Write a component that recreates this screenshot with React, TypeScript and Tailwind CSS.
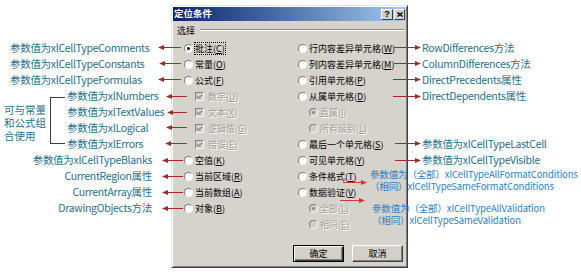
import React from "react";

type Opt = {
  t: string;
  k: string;
  kind?: "radio" | "check";
  on?: boolean;
  off?: boolean;
  indent?: boolean;
  focus?: boolean;
};

const leftOpts: Opt[] = [
  { t: "批注", k: "C", on: true, focus: true },
  { t: "常量", k: "O" },
  { t: "公式", k: "F" },
  { t: "数字", k: "U", kind: "check", on: true, off: true, indent: true },
  { t: "文本", k: "X", kind: "check", on: true, off: true, indent: true },
  { t: "逻辑值", k: "G", kind: "check", on: true, off: true, indent: true },
  { t: "错误", k: "E", kind: "check", on: true, off: true, indent: true },
  { t: "空值", k: "K" },
  { t: "当前区域", k: "R" },
  { t: "当前数组", k: "A" },
  { t: "对象", k: "B" },
];

const rightOpts: Opt[] = [
  { t: "行内容差异单元格", k: "W" },
  { t: "列内容差异单元格", k: "M" },
  { t: "引用单元格", k: "P" },
  { t: "从属单元格", k: "D" },
  { t: "直属", k: "I", on: true, off: true, indent: true },
  { t: "所有级别", k: "L", off: true, indent: true },
  { t: "最后一个单元格", k: "S" },
  { t: "可见单元格", k: "Y" },
  { t: "条件格式", k: "T" },
  { t: "数据验证", k: "V" },
  { t: "全部", k: "L", on: true, off: true, indent: true },
  { t: "相同", k: "E", off: true, indent: true },
];

function Radio({ on, off }: { on?: boolean; off?: boolean }) {
  return (
    <span
      className={`flex h-[9px] w-[9px] shrink-0 items-center justify-center rounded-full border border-t-[#808080] border-l-[#808080] border-r-[#f4f4f4] border-b-[#f4f4f4] ${
        off ? "bg-[#d4d0c8]" : "bg-white"
      }`}
    >
      {on && <span className={`h-[3px] w-[3px] rounded-full ${off ? "bg-[#8d8a83]" : "bg-black"}`} />}
    </span>
  );
}

function Check() {
  return (
    <span className="flex h-[9px] w-[9px] shrink-0 items-center justify-center border border-t-[#808080] border-l-[#808080] border-r-white border-b-white bg-[#d4d0c8]">
      <svg width="7" height="7" viewBox="0 0 7 7">
        <path d="M1 3.3 L2.8 5.1 L6 1.6" fill="none" stroke="#8d8a83" strokeWidth="1.4" />
      </svg>
    </span>
  );
}

function Option({ o }: { o: Opt }) {
  const check = o.kind === "check";
  const tone = o.off ? "text-[#a29e96] [text-shadow:1px_1px_0_#fff]" : "text-black";
  return (
    <div className={`flex h-4 items-center ${o.indent ? "pl-[11px]" : ""}`}>
      {check ? <Check /> : <Radio on={o.on} off={o.off} />}
      <span
        className={`whitespace-nowrap text-[9px] leading-none ${tone} ${check ? "ml-[3px]" : "ml-[1px]"} ${
          o.focus ? "border border-dotted border-black py-[1px]" : "border border-transparent py-[1px]"
        }`}
      >
        {o.t}(<span className="underline">{o.k}</span>)
      </span>
    </div>
  );
}

function Dialog() {
  return (
    <div className="mt-[5px] flex h-[263px] w-[237px] shrink-0 flex-col border border-t-[#e8e6e1] border-l-[#e8e6e1] border-r-[#404040] border-b-[#404040] bg-[#d6d3cd] p-[1px] shadow-[inset_1px_1px_0_#fff,inset_-1px_-1px_0_#808080]">
      {/* title bar */}
      <div className="flex h-[14px] items-center justify-between bg-linear-to-r from-[#0a246a] to-[#a6caf0] pl-[1px] pr-[1px]">
        <span className="text-[9.5px] font-bold leading-none text-white">定位条件</span>
        <div className="flex gap-[1px]">
          <span className="flex h-[11px] w-[12px] items-center justify-center border border-t-white border-l-white border-r-[#404040] border-b-[#404040] bg-[#d4d0c8] font-['Liberation_Sans',sans-serif] text-[9px] font-bold leading-none text-black">
            ?
          </span>
          <span className="flex h-[11px] w-[11px] items-center justify-center border border-t-white border-l-white border-r-[#404040] border-b-[#404040] bg-[#d4d0c8]">
            <svg width="6" height="5" viewBox="0 0 6 5">
              <path d="M0.5 0.5 L5.5 4.5 M5.5 0.5 L0.5 4.5" stroke="#000" strokeWidth="1.4" />
            </svg>
          </span>
        </div>
      </div>

      {/* group caption */}
      <div className="mt-[3px] flex h-[12px] items-center pl-[4px] pr-[2px]">
        <span className="text-[9px] leading-none text-black">选择</span>
        <span className="ml-[5px] h-[2px] flex-1 border-t border-b border-t-[#8a877f] border-b-white" />
      </div>

      {/* options */}
      <div className="mt-[4px] flex">
        <div className="w-[125px] shrink-0 pl-[11px]">
          {leftOpts.map((o) => (
            <Option key={o.t} o={o} />
          ))}
        </div>
        <div className="flex-1">
          {rightOpts.map((o) => (
            <Option key={o.t} o={o} />
          ))}
        </div>
      </div>

      {/* buttons */}
      <div className="mt-[13px] flex justify-end gap-[8px] pr-[3px]">
        <button className="flex h-[17px] w-[51px] items-center justify-center border border-black bg-[#d4d0c8] text-[9px] leading-none text-black shadow-[inset_1px_1px_0_#fff,inset_-1px_-1px_0_#404040,inset_-2px_-2px_0_#808080]">
          确定
        </button>
        <button className="flex h-[17px] w-[51px] items-center justify-center border border-t-white border-l-white border-r-[#404040] border-b-[#404040] bg-[#d4d0c8] text-[9px] leading-none text-black shadow-[inset_-1px_-1px_0_#808080]">
          取消
        </button>
      </div>
    </div>
  );
}

const note = "flex h-4 items-center whitespace-nowrap text-[10.5px] leading-none tracking-[-0.3px] text-[#2b6f8e]";

function LeftNotes() {
  return (
    <div className="w-[171px] shrink-0 pt-[40px]">
      <div className={`${note} pl-[10px]`}>参数值为xlCellTypeComments</div>
      <div className={`${note} pl-[10px]`}>参数值为xlCellTypeConstants</div>
      <div className={`${note} pl-[10px]`}>参数值为xlCellTypeFormulas</div>

      <div className="flex h-[64px]">
        <div className="w-[50px] whitespace-nowrap pl-[4px] pt-[15px] text-[10.5px] leading-[13px] text-[#2b6f8e]">
          可与常量
          <br />
          和公式组
          <br />
          合使用
        </div>
        <div className="mt-[9px] h-[47px] w-[15px] border border-r-0 border-[#3c3c3c]" />
        <div className="ml-[2px]">
          <div className={note}>参数值为xlNumbers</div>
          <div className={note}>参数值为xlTextValues</div>
          <div className={note}>参数值为xlLogical</div>
          <div className={note}>参数值为xlErrors</div>
        </div>
      </div>

      <div className="pr-[19px]">
        <div className={`${note} justify-end`}>参数值为xlCellTypeBlanks</div>
        <div className={`${note} justify-end`}>CurrentRegion属性</div>
        <div className={`${note} justify-end`}>CurrentArray属性</div>
        <div className={`${note} justify-end`}>DrawingObjects方法</div>
      </div>
    </div>
  );
}

function RightNotes() {
  return (
    <div className="flex-1 pl-[14px] pt-[40px]">
      <div className={note}>RowDifferences方法</div>
      <div className={note}>ColumnDifferences方法</div>
      <div className={note}>DirectPrecedents属性</div>
      <div className={note}>DirectDependents属性</div>
      <div className="h-8" />
      <div className={note}>参数值为xlCellTypeLastCell</div>
      <div className={note}>参数值为xlCellTypeVisible</div>
    </div>
  );
}

function Arrows() {
  const dark = "#9b2b2d";
  const red = "#c83a34";
  const left: [number, number, number][] = [
    [158, 181, 47.5],
    [159, 181, 63.5],
    [158, 181, 79.5],
    [166, 187, 96.5],
    [167, 187, 112.5],
    [166, 187, 127.5],
    [165, 187, 143.5],
    [162, 183, 160.5],
    [162, 183, 176.5],
    [162, 183, 192.5],
    [162, 183, 208.5],
  ];
  const right: [number, number, number, string][] = [
    [394, 421, 47.5, dark],
    [394, 421, 63.5, dark],
    [393, 421, 79.5, dark],
    [393, 421, 96.5, dark],
    [395, 421, 143.5, dark],
    [395, 421, 160.5, dark],
    [343, 367, 182.5, red],
    [340, 365, 200.5, red],
  ];
  return (
    <svg className="pointer-events-none absolute left-0 top-0" width="581" height="275">
      {left.map(([h, e, y], i) => (
        <g key={`l${i}`}>
          <line x1={h + 4} y1={y} x2={e} y2={y} stroke={dark} strokeWidth="1" />
          <polygon points={`${h},${y} ${h + 6},${y - 2.5} ${h + 6},${y + 2.5}`} fill={dark} />
        </g>
      ))}
      {right.map(([s, h, y, c], i) => (
        <g key={`r${i}`}>
          <line x1={s} y1={y} x2={h - 4} y2={y} stroke={c} strokeWidth="1" />
          <polygon points={`${h},${y} ${h - 6},${y - 2.5} ${h - 6},${y + 2.5}`} fill={c} />
        </g>
      ))}
    </svg>
  );
}

export default function App() {
  return (
    <div className="relative flex h-[275px] w-[581px] items-start overflow-hidden bg-white font-['Noto_Sans_CJK_SC','Noto_Sans',sans-serif]">
      <LeftNotes />
      <Dialog />
      <RightNotes />

      {/* notes that lie over the dialog's edge */}
      <div className="absolute left-[370px] top-[168px] whitespace-nowrap text-[9.5px] leading-[12px] tracking-[-0.15px] text-[#2e7fc2]">
        参数值为（全部）xlCellTypeAllFormatConditions
        <br />
        （相同）xlCellTypeSameFormatConditions
      </div>
      <div className="absolute left-[372px] top-[202px] whitespace-nowrap text-[9.5px] leading-[12px] tracking-[-0.15px] text-[#2e7fc2]">
        参数值为（全部）xlCellTypeAllValidation
        <br />
        （相同）xlCellTypeSameValidation
      </div>

      <Arrows />
    </div>
  );
}
